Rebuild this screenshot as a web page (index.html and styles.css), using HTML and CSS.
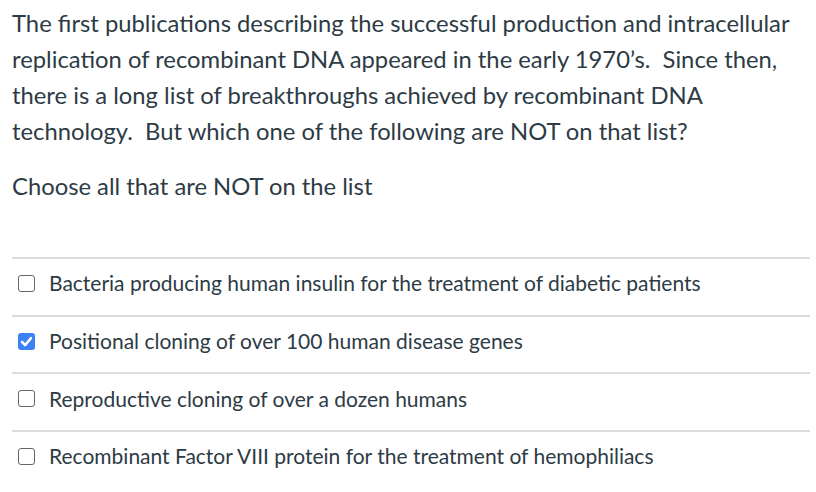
FILE: index.html
```html
<!DOCTYPE html>
<html>
<head>
<meta charset="utf-8">
<link rel="stylesheet" href="styles.css">
</head>
<body>
<div class="question">
  <p class="stem">The first publications describing the successful production and intracellular replication of recombinant DNA appeared in the early 1970’s.&nbsp; Since then, there is a long list of breakthroughs achieved by recombinant DNA technology.&nbsp; But which one of the following are NOT on that list?</p>
  <p class="stem instr">Choose all that are NOT on the list</p>
  <div class="answers">
    <div class="answer">
      <span class="box"></span>
      <span class="label">Bacteria producing human insulin for the treatment of diabetic patients</span>
    </div>
    <div class="answer">
      <span class="box checked"><svg viewBox="0 0 17 17" width="17" height="17"><path d="M4 8.8 L7.2 12 L13 5.2" fill="none" stroke="#fff" stroke-width="2.6" stroke-linecap="round" stroke-linejoin="round"/></svg></span>
      <span class="label">Positional cloning of over 100 human disease genes</span>
    </div>
    <div class="answer">
      <span class="box"></span>
      <span class="label">Reproductive cloning of over a dozen humans</span>
    </div>
    <div class="answer">
      <span class="box"></span>
      <span class="label">Recombinant Factor VIII protein for the treatment of hemophiliacs</span>
    </div>
  </div>
</div>
</body>
</html>
```
FILE: styles.css
```css
html, body {
  margin: 0;
  padding: 0;
  background: #fff;
}
body {
  font-family: Lato, "Liberation Sans", sans-serif;
  color: #2d3b45;
}
.question {
  padding: 5px 6px 0 12px;
}
.stem {
  margin: 0 0 19px 0;
  font-size: 23.8px;
  line-height: 36px;
}
.instr {
  margin-bottom: 0;
}
.answers {
  margin-top: 53px;
}
.answer {
  display: flex;
  align-items: center;
  border-top: 2px solid #dcdcdc;
  height: 57.7px;
  box-sizing: border-box;
  padding-left: 6px;
  padding-bottom: 7px;
  font-size: 21px;
}
.box {
  width: 17px;
  height: 17px;
  box-sizing: border-box;
  border: 1.5px solid #666;
  border-radius: 3px;
  margin-right: 14px;
  flex: none;
  display: flex;
}
.box.checked {
  background: #3b82f6;
  border: none;
}
.label {
  line-height: 28px;
}
```
